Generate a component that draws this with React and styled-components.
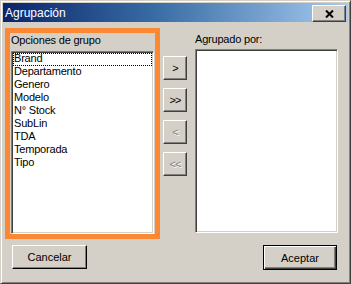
import React, { useState } from "react";
import styled, { createGlobalStyle } from "styled-components";

const GlobalStyle = createGlobalStyle`
    html, body {
        margin: 0;
        padding: 0;
        background: #d4d0c8;
    }
    body {
        font-family: "Liberation Sans", Arial, sans-serif;
        font-size: 11px;
        color: #000;
    }
`;

const options = ["Brand", "Departamento", "Genero", "Modelo", "N° Stock", "SubLin", "TDA", "Temporada", "Tipo"];

function App() {
    const [selected, setSelected] = useState(0);

    return (
        <>
            <GlobalStyle />
            <Window>
                <TitleBar>
                    <Title>Agrupación</Title>
                    <CloseBtn type="button">
                        <svg width="9" height="8" viewBox="0 0 9 8">
                            <path d="M1 0.5 L8 7.5 M8 0.5 L1 7.5" stroke="#000" strokeWidth="2" fill="none" />
                        </svg>
                    </CloseBtn>
                </TitleBar>
                <Client>
                    <MainRow>
                        <Highlight>
                            <Label>Opciones de grupo</Label>
                            <ListBox $height={183}>
                                {options.map((opt, i) => (
                                    <Item key={opt} $focused={i === selected} onClick={() => setSelected(i)}>
                                        {opt}
                                    </Item>
                                ))}
                            </ListBox>
                        </Highlight>
                        <Arrows>
                            <ArrowBtn type="button">&gt;</ArrowBtn>
                            <ArrowBtn type="button">&gt;&gt;</ArrowBtn>
                            <ArrowBtn type="button" disabled>&lt;</ArrowBtn>
                            <ArrowBtn type="button" disabled>&lt;&lt;</ArrowBtn>
                        </Arrows>
                        <RightGroup>
                            <Label>Agrupado por:</Label>
                            <ListBox $height={184} />
                        </RightGroup>
                    </MainRow>
                    <Footer>
                        <PushBtn type="button">Cancelar</PushBtn>
                        <PushBtn type="button" $default>Aceptar</PushBtn>
                    </Footer>
                </Client>
            </Window>
        </>
    );
}

export default App;

const Window = styled.div`
    width: 351px;
    height: 284px;
    box-sizing: border-box;
    background: #d4d0c8;
    border-top: 1px solid #d4d0c8;
    border-left: 1px solid #d4d0c8;
    border-right: 1px solid #404040;
    border-bottom: 1px solid #404040;
    box-shadow: inset 1px 1px 0 #ffffff, inset -1px -1px 0 #808080;
    padding: 2px;
    display: flex;
    flex-direction: column;
`;

const TitleBar = styled.div`
    height: 19px;
    flex-shrink: 0;
    display: flex;
    align-items: center;
    justify-content: space-between;
    padding: 0 2px 0 2px;
    background: linear-gradient(to right, #0a246a 0%, #3a6ea5 45%, #a6caf0 100%);
`;

const Title = styled.span`
    color: #fff;
    font-size: 12px;
    line-height: 19px;
    padding-top: 1px;
`;

const CloseBtn = styled.button`
    width: 34px;
    height: 17px;
    margin-top: 2px;
    padding: 0;
    display: flex;
    align-items: center;
    justify-content: center;
    background: #d4d0c8;
    border-top: 1px solid #ffffff;
    border-left: 1px solid #ffffff;
    border-right: 1px solid #404040;
    border-bottom: 1px solid #404040;
    box-shadow: inset -1px -1px 0 #808080;
`;

const Client = styled.div`
    flex: 1;
    display: flex;
    flex-direction: column;
    padding: 6px 0 0 2px;
`;

const MainRow = styled.div`
    display: flex;
    align-items: flex-start;
`;

const Highlight = styled.div`
    width: 155px;
    height: 211px;
    box-sizing: border-box;
    border: 5px solid #fd8833;
    padding: 0 1px 0 1px;
    display: flex;
    flex-direction: column;
`;

const Label = styled.div`
    height: 18px;
    line-height: 13px;
    padding-top: 1px;
    box-sizing: border-box;
    letter-spacing: -0.2px;
    white-space: nowrap;
`;

const ListBox = styled.div`
    height: ${(p) => p.$height}px;
    box-sizing: border-box;
    background: #fff;
    border-top: 1px solid #808080;
    border-left: 1px solid #808080;
    border-right: 1px solid #ffffff;
    border-bottom: 1px solid #ffffff;
    box-shadow: inset 1px 1px 0 #404040, inset -1px -1px 0 #d4d0c8;
    padding: 1px 1px 0 1px;
    display: flex;
    flex-direction: column;
`;

const Item = styled.div`
    height: 13px;
    line-height: 11px;
    padding: 0 0 2px 1px;
    box-sizing: border-box;
    letter-spacing: -0.2px;
    white-space: nowrap;
    outline: ${(p) => (p.$focused ? "1px dotted #000" : "none")};
    outline-offset: -1px;
    cursor: default;
`;

const Arrows = styled.div`
    display: flex;
    flex-direction: column;
    gap: 8px;
    margin: 28px 8px 0 3px;
`;

const ArrowBtn = styled.button`
    width: 24px;
    height: 24px;
    padding: 0;
    font-family: "Liberation Sans", Arial, sans-serif;
    font-size: 11px;
    letter-spacing: -1px;
    color: #000;
    background: #d4d0c8;
    border-top: 1px solid #ffffff;
    border-left: 1px solid #ffffff;
    border-right: 1px solid #404040;
    border-bottom: 1px solid #404040;
    box-shadow: inset -1px -1px 0 #808080;
    &:disabled {
        color: #808080;
        text-shadow: 1px 1px 0 #ffffff;
    }
`;

const RightGroup = styled.div`
    display: flex;
    flex-direction: column;
    width: 143px;
    padding-top: 4px;

    & > div:first-child {
        height: 17px;
    }
`;

const Footer = styled.div`
    display: flex;
    justify-content: space-between;
    margin-top: 6px;
    padding: 0 11px 0 7px;
`;

const PushBtn = styled.button`
    width: ${(p) => (p.$default ? "74px" : "75px")};
    height: ${(p) => (p.$default ? "25px" : "24px")};
    padding: 0;
    font-family: "Liberation Sans", Arial, sans-serif;
    font-size: 11px;
    color: #000;
    background: #d4d0c8;
    border-top: 1px solid ${(p) => (p.$default ? "#000" : "#ffffff")};
    border-left: 1px solid ${(p) => (p.$default ? "#000" : "#ffffff")};
    border-right: 1px solid #000;
    border-bottom: 1px solid #000;
    box-shadow: ${(p) =>
        p.$default
            ? "inset 1px 1px 0 #ffffff, inset -1px -1px 0 #404040, inset -2px -2px 0 #808080"
            : "inset -1px -1px 0 #808080"};
`;
